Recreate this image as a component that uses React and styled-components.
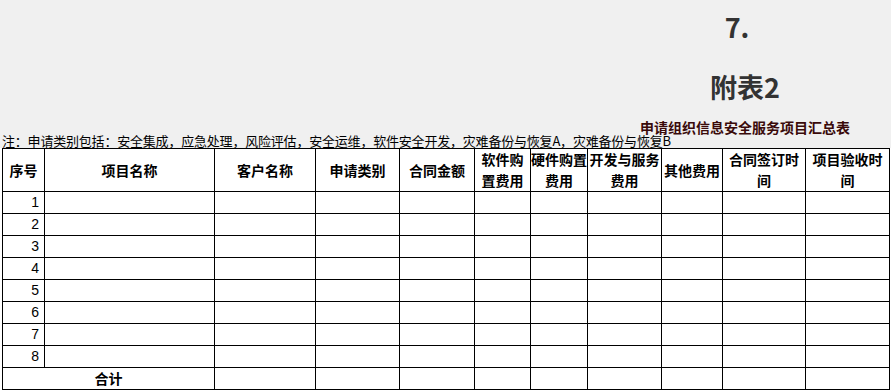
import React from "react";
import styled, { createGlobalStyle } from "styled-components";

const GlobalStyle = createGlobalStyle`
  html, body {
    margin: 0;
    padding: 0;
    background: #ffffff;
  }
  body {
    font-family: "Noto Sans CJK SC", "Noto Sans", sans-serif;
    color: #000;
  }
`;

const Page = styled.div`
  width: 891px;
  height: 392px;
  overflow: hidden;
  background: #ffffff;
`;

const Top = styled.div`
  height: 148px;
  background: #f0f0f0;
  display: flex;
  flex-direction: column;
`;

const Heading = styled.div`
  padding-left: ${(p) => p.$left}px;
  width: 290px;
  text-align: center;
  font-family: "Noto Sans CJK SC", "Noto Sans", sans-serif;
  font-weight: 700;
  font-size: 27px;
  line-height: 27px;
  color: #333333;
  margin-top: ${(p) => p.$top}px;
`;

const Title = styled.div`
  padding-left: 600px;
  width: 290px;
  text-align: center;
  font-family: "Noto Sans CJK SC", sans-serif;
  font-weight: 700;
  font-size: 14px;
  line-height: 14px;
  color: #3a0a0a;
  margin-top: auto;
`;

const Note = styled.div`
  padding-left: 2px;
  font-family: "Noto Sans CJK SC", sans-serif;
  font-size: 13px;
  line-height: 14px;
  letter-spacing: -0.2px;
  white-space: nowrap;
  color: #000;
`;

const Table = styled.table`
  border-collapse: collapse;
  table-layout: fixed;
  width: 888px;
  margin-left: 2px;
  background: #ffffff;
`;

const HeadCell = styled.th`
  border: 1px solid #000;
  height: 42px;
  padding: 0;
  font-family: "Noto Sans CJK SC", sans-serif;
  font-weight: 700;
  font-size: 14px;
  line-height: 21px;
  text-align: center;
  vertical-align: middle;
  color: #000;
`;

const Row = styled.tr`
  height: 22px;
`;

const Cell = styled.td`
  border: 1px solid #000;
  padding: 0 5px 0 0;
  height: 21px;
  font-family: "Liberation Sans", Arial, sans-serif;
  font-size: 14px;
  line-height: 21px;
  text-align: right;
  color: #000;
`;

const TotalCell = styled(Cell)`
  font-family: "Noto Sans CJK SC", sans-serif;
  text-align: center;
  font-weight: 700;
  padding: 0;
`;

const widths = [42, 170, 101, 84, 75, 56, 57, 74, 61, 83, 84];

const headers = [
  ["序号"],
  ["项目名称"],
  ["客户名称"],
  ["申请类别"],
  ["合同金额"],
  ["软件购", "置费用"],
  ["硬件购置", "费用"],
  ["开发与服务", "费用"],
  ["其他费用"],
  ["合同签订时", "间"],
  ["项目验收时", "间"],
];

const rows = [1, 2, 3, 4, 5, 6, 7, 8];

export default function App() {
  return (
    <Page>
      <GlobalStyle />
      <Top>
        <Heading $top={13} $left={592}>7.</Heading>
        <Heading $top={33} $left={600}>附表2</Heading>
        <Title>申请组织信息安全服务项目汇总表</Title>
        <Note>注：申请类别包括：安全集成，应急处理，风险评估，安全运维，软件安全开发，灾难备份与恢复A，灾难备份与恢复B</Note>
      </Top>
      <Table>
        <colgroup>
          {widths.map((w, i) => (
            <col key={i} style={{ width: w }} />
          ))}
        </colgroup>
        <thead>
          <tr>
            {headers.map((h, i) => (
              <HeadCell key={i}>
                {h.map((line, j) => (
                  <React.Fragment key={j}>
                    {j > 0 && <br />}
                    {line}
                  </React.Fragment>
                ))}
              </HeadCell>
            ))}
          </tr>
        </thead>
        <tbody>
          {rows.map((n) => (
            <Row key={n}>
              <Cell>{n}</Cell>
              {widths.slice(1).map((_, i) => (
                <Cell key={i} />
              ))}
            </Row>
          ))}
          <Row>
            <TotalCell colSpan={2}>合计</TotalCell>
            {widths.slice(2).map((_, i) => (
              <Cell key={i} />
            ))}
          </Row>
        </tbody>
      </Table>
    </Page>
  );
}
